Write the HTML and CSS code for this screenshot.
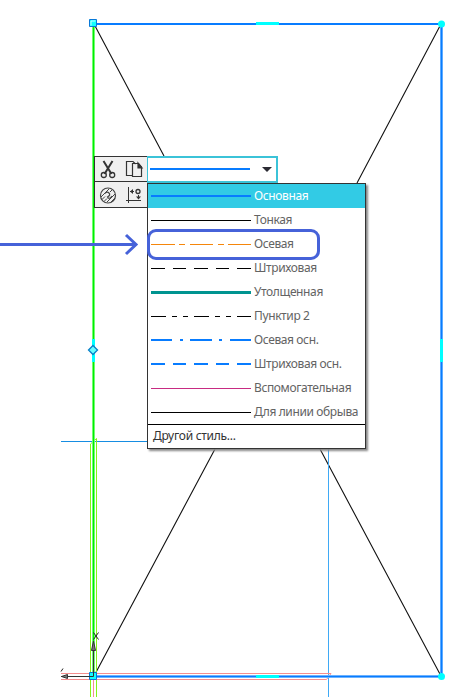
FILE: index.html
```
<!DOCTYPE html>
<html lang="ru">
<head>
<meta charset="utf-8">
<title>Стиль линии</title>
<link rel="stylesheet" href="styles.css">
</head>
<body>
<main class="workspace">
  <svg class="drawing" viewBox="0 0 472 698" width="472" height="698" fill="none">
    <g stroke="#111" stroke-width="1.100">
      <path d="M94 24L164 156M441 24L357 183M94 676L215 449M441 676L320 449"/>
    </g>
    <path d="M61 441.500H148" stroke="#168de2"/>
    <path d="M328.500 449V697" stroke="#3fa9f5"/>
    <path d="M90.500 697V444L96.500 438.500V697" stroke="#84f51a"/>
    <path d="M61 673.500H331L326.500 679.500H61M93.500 679V697" stroke="#f58f8f"/>
    <path d="M94 24H442" stroke="#087cff" stroke-width="2"/>
    <path d="M441.500 24V676M94 676.500H442" stroke="#8ec5ff" stroke-width="3"/>
    <path d="M441.500 24V676M94 676.500H442" stroke="#087cff" stroke-width="1.700"/>
    <path d="M93.500 24V676" stroke="#86ff86" stroke-width="3"/>
    <path d="M93.500 24V676" stroke="#00ee00" stroke-width="1.300"/>
    <path d="M256 23.500H279M256 676.500H279M441.500 339V362M93.500 339V362" stroke="#00ffff" stroke-width="3"/>
    <path d="M93 345.500L97.500 350L93 354.500L88.500 350Z" fill="#6ff" stroke="#087fc8" stroke-width="1.300"/>
    <path d="M89.500 19.500H96.500V26.500H89.500ZM89.500 672.500H96.500V679.500H89.500Z" fill="#1ff" stroke="#0878d8"/>
    <path d="M91 25.500V21H95.500" stroke="#c8ffff"/>
    <circle cx="441.500" cy="24" r="3.500" fill="#00ffff"/>
    <circle cx="441.500" cy="676.500" r="3.500" fill="#00ffff"/>
    <path d="M93.500 676.500V641M93.500 676.500H61" stroke="#333"/>
    <path d="M93.500 641L91.500 650.500H95.500ZM61.500 676.500L67.500 674.500V678.500Z" fill="#777" stroke="#333"/>
    <path d="M93.500 632.500L98.500 639.500M98.500 632.500L93.500 639.500M63 668.500L61 671.500" stroke="#222"/>
    <path d="M0 244.500H136M126 235L136 244.500L126 254" stroke="#4662d9" stroke-width="3"/>
  </svg>

  <section class="toolbar">
    <div class="tools">
      <svg class="tool" viewBox="0 0 26 25" fill="none" stroke="#333">
        <path d="M8.500 4L16.500 17M17.500 4L9.500 17" stroke-width="2"/>
        <circle cx="8.800" cy="18" r="2.500" stroke-width="1.300"/><circle cx="17.200" cy="18" r="2.500" stroke-width="1.300"/>
      </svg>
      <svg class="tool" viewBox="0 0 26 25" fill="none" stroke="#333" stroke-width="1.200">
        <path d="M11 18.500H5.500V4.500H12L14.500 7M11.500 6.500H17.500L20.500 10V19.500H11.500Z"/>
        <path d="M17 6V11H21Z" fill="#333"/>
      </svg>
      <svg class="tool" viewBox="0 0 26 25" fill="none" stroke="#444">
        <circle cx="13" cy="12.500" r="7.500" stroke-width="1.200"/>
        <path d="M6 14L14 6M7 16.500L10 13.500M15 9L17 7M9 18.500L12 15.500M12 19L20 11M16 19L20 15"/>
        <path d="M10 10.500Q12 8 14 10T12.500 14Q14 17 17 13" stroke-width="1.200"/>
      </svg>
      <svg class="tool" viewBox="0 0 26 25" fill="none" stroke="#333">
        <path d="M7.500 4V20M5 17.500H20M9 8.500H13"/>
        <path d="M9 8.500L12 6V11Z" fill="#333" stroke="none"/>
        <circle cx="17" cy="8.500" r="2" stroke-width="1.300"/>
        <path d="M17.500 12V16"/><path d="M15 13.500H20L17.500 16.500Z" fill="#333" stroke="none"/>
      </svg>
    </div>
    <div class="combo">
      <svg width="100" height="3"><path d="M0 1H100" stroke="#087cff" stroke-width="2"/></svg>
      <svg class="caret" width="10" height="5"><path d="M0 0H10L5 5Z" fill="#2b2b33"/></svg>
    </div>
  </section>

  <section class="menu">
    <ul class="styles">
      <li class="row selected"><svg class="sample" viewBox="0 0 100 24"><path d="M0 12H100" stroke="#087cff" stroke-width="2"/></svg><span>Основная</span></li>
      <li class="row"><svg class="sample" viewBox="0 0 100 24"><path d="M0 12.500H100" stroke="#000"/></svg><span>Тонкая</span></li>
      <li class="row"><svg class="sample" viewBox="0 0 100 24"><path d="M0 12.500H100" stroke="#f5860b" stroke-dasharray="24 4 6 5 23 5 6 4 23"/></svg><span>Осевая</span></li>
      <li class="row"><svg class="sample" viewBox="0 0 100 24"><path d="M0 12.500H100" stroke="#000" stroke-dasharray="14 8 13 8 14 8 13 8 14"/></svg><span>Штриховая</span></li>
      <li class="row"><svg class="sample" viewBox="0 0 100 24"><path d="M0 12.500H100" stroke="#009490" stroke-width="3"/></svg><span>Утолщенная</span></li>
      <li class="row"><svg class="sample" viewBox="0 0 100 24"><path d="M0 12.500H100" stroke="#000" stroke-dasharray="15 6 5 6 5 6 15 6 5 6 5 6 14"/></svg><span>Пунктир 2</span></li>
      <li class="row"><svg class="sample" viewBox="0 0 100 24"><path d="M0 12H100" stroke="#087cff" stroke-width="2" stroke-dasharray="21 8 3 7 22 7 3 8 21"/></svg><span>Осевая осн.</span></li>
      <li class="row"><svg class="sample" viewBox="0 0 100 24"><path d="M0 12H100" stroke="#087cff" stroke-width="2" stroke-dasharray="14 8 13 8 14 8 13 8 14"/></svg><span>Штриховая осн.</span></li>
      <li class="row"><svg class="sample" viewBox="0 0 100 24"><path d="M0 12.500H100" stroke="#c72b82"/></svg><span>Вспомогательная</span></li>
      <li class="row"><svg class="sample" viewBox="0 0 100 24"><path d="M0 12.500H100" stroke="#000"/></svg><span>Для линии обрыва</span></li>
    </ul>
    <div class="other">Другой стиль...</div>
    <div class="callout"></div>
  </section>
</main>
</body>
</html>
```
FILE: styles.css
```
* {
  box-sizing: border-box;
}

body {
  margin: 0;
  background: #fff;
  font-family: "Noto Sans", "Open Sans", sans-serif;
  font-size: 12px;
}

.workspace {
  position: relative;
  width: 472px;
  height: 698px;
  overflow: hidden;
}

.drawing {
  display: block;
}

.toolbar {
  position: absolute;
  left: 94px;
  top: 156px;
  display: flex;
  align-items: flex-start;
}

.tools {
  display: grid;
  grid-template-columns: 26px 26px;
  grid-template-rows: 25px 25px;
  row-gap: 1px;
  width: 53px;
  height: 52px;
  border: 1px solid #333;
  border-right: 0;
  background: linear-gradient(#333, #333) 0 24px / 100% 1px no-repeat #f0f0f0;
}

.tool {
  display: block;
  width: 26px;
  height: 25px;
}

.combo {
  display: flex;
  align-items: center;
  justify-content: space-between;
  width: 131px;
  height: 27px;
  padding: 0 4px 1px 2px;
  border: 2px solid #3bc3d8;
  border-left-width: 1px;
  background: #fff;
}

.menu {
  position: absolute;
  left: 147px;
  top: 183px;
  width: 219px;
  height: 266px;
  border: 1px solid #333;
  background: #fff;
  box-shadow: 2px 2px 2px #888;
}

.styles {
  margin: 0;
  padding: 0;
  list-style: none;
}

.row {
  display: flex;
  align-items: center;
  gap: 3px;
  height: 24px;
  padding-left: 3px;
  color: #636363;
  line-height: 24px;
  letter-spacing: -0.38px;
  white-space: nowrap;
}

.selected {
  background: #32cbe5;
  color: #fff;
}

.sample {
  flex: none;
  width: 100px;
  height: 24px;
}

.other {
  height: 24px;
  padding-left: 5px;
  border-top: 1px solid #000;
  color: #333;
  line-height: 22px;
  letter-spacing: -0.28px;
}

.callout {
  position: absolute;
  left: -1px;
  top: 45px;
  width: 173px;
  height: 31px;
  border: 3px solid #4662d9;
  border-radius: 9px;
}
```
